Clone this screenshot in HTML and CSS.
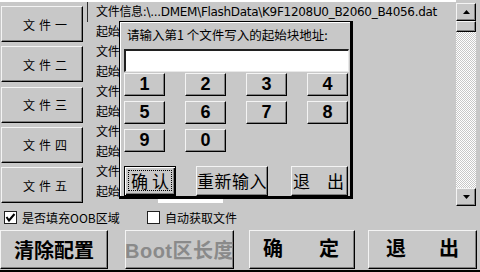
FILE: index.html
```html
<!DOCTYPE html>
<html>
<head>
<meta charset="utf-8">
<link rel="stylesheet" href="styles.css">
</head>
<body>
<div class="screen">
  <div class="main">
    <div class="side">
      <div class="fbtn raised">文件一</div>
      <div class="fbtn raised">文件二</div>
      <div class="fbtn raised">文件三</div>
      <div class="fbtn raised">文件四</div>
      <div class="fbtn raised">文件五</div>
    </div>
    <div class="info">
      <div class="line first">文件信息:\...DMEM\FlashData\K9F1208U0_B2060_B4056.dat</div>
      <div class="line"><span class="lbl">起始块地址:</span><span class="field"></span></div>
      <div class="line">文件信息:</div>
      <div class="line"><span class="lbl">起始块地址:</span><span class="field"></span></div>
      <div class="line">文件信息:</div>
      <div class="line"><span class="lbl">起始块地址:</span><span class="field"></span></div>
      <div class="line">文件信息:</div>
      <div class="line"><span class="lbl">起始块地址:</span><span class="field"></span></div>
      <div class="line">文件信息:</div>
      <div class="line"><span class="lbl">起始块地址:</span><span class="field"></span></div>
    </div>
    <div class="vscroll">
      <div class="sb-btn raised"><svg width="7" height="4" viewBox="0 0 7 4"><polygon points="0,4 3.5,0 7,4" fill="#000"/></svg></div>
      <div class="sb-thumb raised"></div>
      <div class="sb-track"></div>
      <div class="sb-btn raised"><svg width="7" height="4" viewBox="0 0 7 4"><polygon points="0,0 3.5,4 7,0" fill="#000"/></svg></div>
    </div>
  </div>
  <div class="checks">
    <div class="chk chk-oob">
      <span class="box"><svg width="11" height="11" viewBox="0 0 11 11"><polyline points="1.5,5 4,8.5 9.5,2" fill="none" stroke="#000" stroke-width="2"/></svg></span>
      <span class="chk-label">是否填充OOB区域</span>
    </div>
    <div class="chk">
      <span class="box"></span>
      <span class="chk-label">自动获取文件</span>
    </div>
  </div>
  <div class="actions">
    <div class="abtn raised a-clear">清除配置</div>
    <div class="abtn raised a-boot disabled">Boot区长度</div>
    <div class="abtn raised a-ok justify">确 定</div>
    <div class="abtn raised a-exit justify">退 出</div>
  </div>

  <div class="dialog">
    <div class="dlg-title">请输入第1 个文件写入的起始块地址:</div>
    <div class="dlg-input"></div>
    <div class="keypad">
      <div class="key raised">1</div>
      <div class="key raised">2</div>
      <div class="key raised">3</div>
      <div class="key raised">4</div>
      <div class="key raised">5</div>
      <div class="key raised">6</div>
      <div class="key raised">7</div>
      <div class="key raised">8</div>
      <div class="key raised">9</div>
      <div class="key raised">0</div>
    </div>
    <div class="dlg-actions">
      <div class="dbtn d-ok focused"><span class="focus-ring justify">确 认</span></div>
      <div class="dbtn raised d-reset">重新输入</div>
      <div class="dbtn raised d-exit justify">退 出</div>
    </div>
  </div>
</div>
</body>
</html>
```

FILE: styles.css
```css
* {
  box-sizing: border-box;
  margin: 0;
  padding: 0;
}

html, body {
  width: 480px;
  height: 272px;
  overflow: hidden;
}

body {
  background: #c8c8c8;
  color: #000;
  font-family: "DejaVu Sans", "Noto Sans CJK SC", sans-serif;
}

.screen {
  position: relative;
  width: 480px;
  height: 272px;
  border-bottom: 2px solid #000;
  display: flex;
  flex-direction: column;
}

.raised {
  background: #c8c8c8;
  border: 1px solid;
  border-color: #f4f4f4 #000 #000 #f4f4f4;
  box-shadow: inset -1px -1px #808080;
}

/* main area */
.main {
  display: flex;
  height: 208px;
}

.side {
  width: 87px;
  border-top: 2px solid #fff;
  padding: 4px 0 0 1px;
  display: flex;
  flex-direction: column;
  gap: 4.25px;
}

.fbtn {
  width: 82px;
  height: 36px;
  display: flex;
  align-items: center;
  justify-content: center;
  font-family: "Noto Sans CJK SC", sans-serif;
  font-size: 12px;
  letter-spacing: 4px;
  padding-left: 10px;
}

.info {
  flex: 1;
  border-top: 2px solid #fff;
  font-size: 12px;
  letter-spacing: -0.3px;
}

.line {
  height: 20px;
  line-height: 20px;
  padding-left: 9px;
  white-space: nowrap;
}

.line.first {
  border-left: 1px solid #303030;
  padding-left: 8px;
}

.lbl {
  display: inline-block;
  width: 62px;
  overflow: hidden;
  vertical-align: top;
}

.field {
  display: inline-block;
  width: 65px;
  height: 18px;
  margin-top: 3px;
  background: #fff;
  vertical-align: top;
}

/* scrollbar */
.vscroll {
  width: 20px;
  margin: 3px 4px 2px 0;
  display: flex;
  flex-direction: column;
}

.sb-btn {
  height: 18px;
  display: flex;
  align-items: center;
  justify-content: center;
}

.sb-thumb {
  height: 11px;
}

.sb-track {
  flex: 1;
  background-color: #c8c8c8;
  background-image: conic-gradient(#fff 25%, #c8c8c8 0 50%, #fff 0 75%, #c8c8c8 0);
  background-size: 2px 2px;
}

/* check boxes */
.checks {
  height: 21px;
  display: flex;
  padding: 3px 0 0 4px;
  font-family: "Noto Sans CJK SC", sans-serif;
  font-size: 12px;
}

.chk {
  display: flex;
  align-items: flex-start;
  gap: 5px;
}

.chk-oob {
  width: 143px;
}

.box {
  width: 13px;
  height: 13px;
  background: #fff;
  border: 1px solid #202020;
  display: flex;
  align-items: center;
  justify-content: center;
}

.chk-label {
  line-height: 13px;
  white-space: nowrap;
}

/* bottom action bar */
.actions {
  height: 41px;
  padding-top: 1px;
  display: flex;
}

.abtn {
  height: 39px;
  display: flex;
  align-items: center;
  justify-content: center;
  font-family: "Liberation Sans", "Noto Sans CJK SC", sans-serif;
  font-weight: bold;
  font-size: 20px;
  white-space: nowrap;
}

.a-clear { width: 108px; }
.a-boot { width: 109px; margin-left: 17px; letter-spacing: 0.5px; }
.a-ok { width: 106px; margin-left: 15px; padding: 0 15px 0 13px; }
.a-exit { width: 109px; margin-left: 13px; padding: 0 17px; }

.disabled {
  color: #8a8a8a;
}

.justify {
  display: block;
  text-align: justify;
  text-align-last: justify;
}

.abtn.justify {
  line-height: 37px;
}

/* dialog */
.dialog {
  position: absolute;
  left: 119px;
  top: 21px;
  width: 234px;
  height: 178px;
  background: #c8c8c8;
  border: 1px solid #000;
  border-right-width: 3px;
  border-bottom-width: 3px;
  box-shadow: inset 1px 1px #fff;
  padding: 0 1px 0 4px;
  display: flex;
  flex-direction: column;
}

.dlg-title {
  height: 27px;
  line-height: 26px;
  padding-left: 3px;
  font-family: "Noto Sans CJK SC", sans-serif;
  font-size: 12.5px;
  white-space: nowrap;
}

.dlg-input {
  height: 23px;
  background: #fff;
  border-top: 2px solid #202020;
  border-left: 2px solid #202020;
  border-right: 1px solid #e8e8e8;
  border-bottom: 1px solid #e8e8e8;
}

.keypad {
  margin-top: 1px;
  display: grid;
  grid-template-columns: repeat(4, 41px);
  grid-auto-rows: 23px;
  column-gap: 20px;
  row-gap: 5px;
}

.key {
  display: flex;
  align-items: center;
  justify-content: center;
  font-family: "Liberation Sans", sans-serif;
  font-weight: bold;
  font-size: 18px;
}

.dlg-actions {
  margin-top: 14px;
  height: 30px;
  display: flex;
}

.dbtn {
  height: 30px;
  font-family: "Noto Sans CJK SC", sans-serif;
  font-size: 17px;
  line-height: 28px;
  white-space: nowrap;
}

.d-ok {
  width: 52px;
  background: #c8c8c8;
  border: 1px solid #000;
  box-shadow: inset 1px 1px #fff, inset -1px -1px #000, inset -2px -2px #808080;
  padding: 3px 3px 4px 3px;
}

.focus-ring {
  height: 100%;
  border: 1px dotted #000;
  line-height: 20px;
  padding: 0 2px 0 2px;
}

.d-reset {
  width: 72px;
  margin-left: 20px;
  text-align: center;
  letter-spacing: 0.5px;
}

.d-exit {
  width: 57px;
  margin-left: 23px;
  padding: 0 3px 0 1px;
}
```
